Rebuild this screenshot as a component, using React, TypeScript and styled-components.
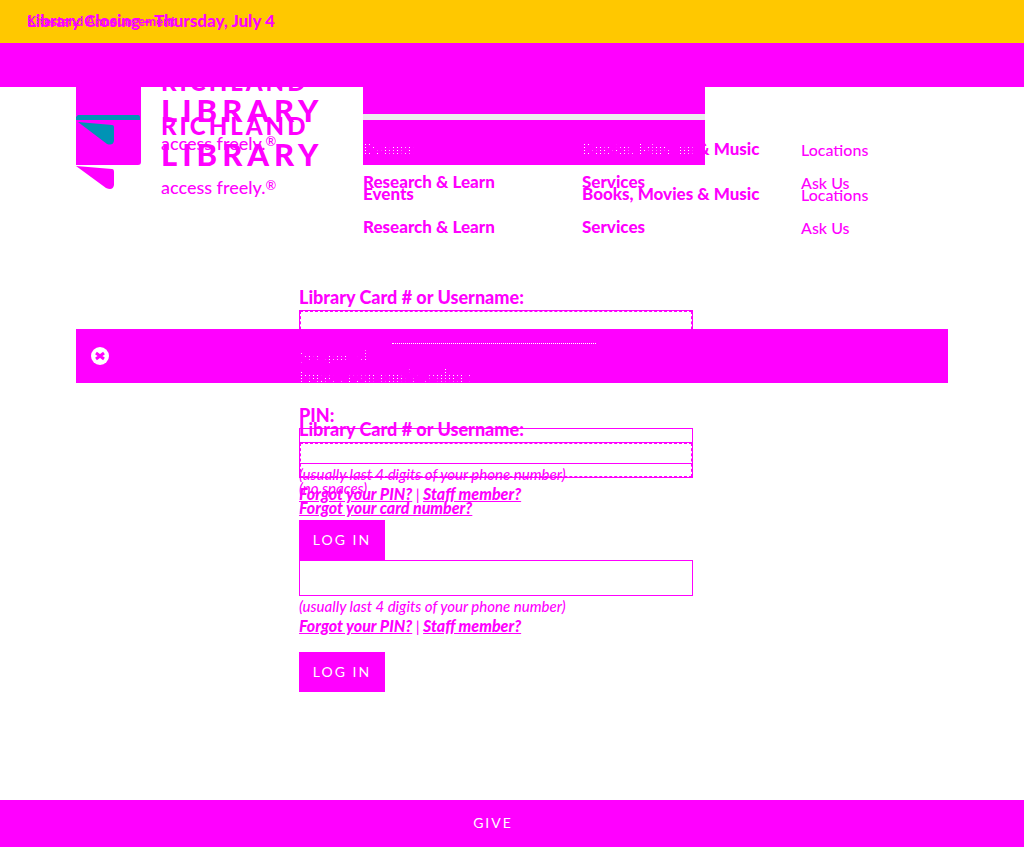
import React from 'react';
import styled, { createGlobalStyle } from 'styled-components';

const magenta = '#ff00ff';
const teal = '#0093b5';
const flecks = (color: string) =>
  `repeating-conic-gradient(${color} 0 12%, transparent 12% 100%) 0 0 / 4px 3px`;

const GlobalStyle = createGlobalStyle`
  * { box-sizing: border-box; }
  body { margin: 0; background: #fff; color: ${magenta}; font: 16px/20px Lato, sans-serif; }
  a { color: inherit; text-decoration: none; }
  p { margin: 0; }
`;

const Page = styled.div`
  min-height: 100vh;
  display: flex;
  flex-direction: column;
`;
const Notice = styled.div`
  display: grid;
  height: 43px;
  align-items: center;
  justify-items: start;
  padding: 0 27px 2px;
  background: #ffc800;
  font-size: 17px;
  font-weight: 900;
  a { grid-area: 1 / 1; }
`;
const OlderNotice = styled.a`
  font-size: 13px;
  color: transparent;
  background: ${flecks('#808060')}, ${magenta};
  background-clip: text;
`;
const Band = styled.div`
  height: 44px;
  background: ${magenta};
`;
const Content = styled.div`
  width: calc(100% - 152px);
  margin: 0 auto;
  flex: 1;
  display: grid;
  align-content: start;
`;
const Header = styled.header`
  grid-area: 1 / 1;
  display: grid;
  grid-template-columns: 287px 1fr;
  align-items: start;
`;
const Brand = styled.div`
  display: grid;
  grid-template-columns: 65px 1fr;
  column-gap: 20px;
`;
const Emblem = styled.svg`
  display: block;
  width: 65px;
  height: 104px;
`;
const Wordmarks = styled.div`
  display: grid;
  height: 120px;
  overflow: hidden;
`;
const Wordmark = styled.div<{ $top: number }>`
  grid-area: 1 / 1;
  margin-top: ${p => p.$top}px;
  white-space: nowrap;
`;
const Richland = styled.div`
  font-size: 24px;
  line-height: 27px;
  font-weight: 900;
  letter-spacing: 3px;
`;
const Library = styled.div`
  font-size: 31px;
  line-height: 30px;
  font-weight: 900;
  letter-spacing: 5px;
`;
const Tagline = styled.div`
  margin-top: 8px;
  font-size: 18px;
  line-height: 20px;
  font-weight: 500;
`;
const Registered = styled.span`
  font-size: 13px;
  line-height: 1;
  vertical-align: 4px;
`;
const HeaderMain = styled.div`
  display: grid;
`;
const Search = styled.div`
  grid-area: 1 / 1;
  width: 342px;
  height: 78px;
  display: flex;
  flex-direction: column;
  gap: 6px;
  background: #ececf0;
`;
const SearchRow = styled.div<{ $height: number }>`
  height: ${p => p.$height}px;
  background: ${magenta};
`;
const Nav = styled.nav<{ $top: number }>`
  grid-area: 1 / 1;
  margin-top: ${p => p.$top}px;
  display: grid;
  grid-template-columns: 219px 219px 1fr;
  align-content: start;
  row-gap: 12px;
  font-size: 17px;
  font-weight: 900;
  white-space: nowrap;
`;
const MinorLink = styled.a`
  padding-top: 1px;
  font-size: 16px;
  font-weight: 500;
`;
const Flecked = styled.span`
  color: transparent;
  background: ${flecks('#fff')};
  background-clip: text;
`;
const Form = styled.form<{ $top: number }>`
  grid-area: 1 / 1;
  justify-self: center;
  width: 394px;
  margin: ${p => p.$top}px 32px 0 0;
  position: relative;
  z-index: 1;
`;
const Label = styled.label`
  display: block;
  height: 23px;
  font-size: 18px;
  font-weight: 900;
`;
const Field = styled.input<{ $dashed?: boolean; $gap?: boolean }>`
  display: block;
  width: 100%;
  height: 36px;
  margin-top: ${p => (p.$gap ? 42 : 0)}px;
  padding: 0 10px;
  border: 1px solid ${magenta};
  border-radius: 0;
  background: transparent;
  color: ${magenta};
  outline: ${p => (p.$dashed ? `1px dashed ${magenta}` : 'none')};
  outline-offset: -2px;
`;
const Hint = styled.p`
  height: 20px;
  font-size: 15px;
  font-style: italic;
  font-weight: 500;
`;
const HintLink = styled.a<{ $plain?: boolean }>`
  font-size: 16px;
  font-weight: 900;
  text-decoration: ${p => (p.$plain ? 'none' : 'underline')};
`;
const Login = styled.button`
  display: block;
  width: 86px;
  height: 40px;
  margin-top: 16px;
  padding: 0;
  border: 0;
  background: ${magenta};
  color: #fff;
  font: 14px/20px Lato, sans-serif;
  letter-spacing: 2px;
`;
const PinLabel = styled(Label)`
  margin-top: 19px;
`;
const Alert = styled.div`
  grid-area: 1 / 1;
  height: 54px;
  margin-top: 242px;
  padding-left: 15px;
  display: flex;
  align-items: center;
  background: ${magenta};
`;
const Close = styled.button`
  display: flex;
  padding: 0;
  border: 0;
  background: none;
`;
const Dots = styled.span`
  align-self: flex-start;
  width: 204px;
  margin: 14px 0 0 283px;
  border-top: 1px dotted #fff;
`;
const Footer = styled.footer`
  height: 47px;
  display: flex;
  align-items: center;
  justify-content: center;
  background: ${magenta};
  color: #fff;
  font-size: 14px;
  letter-spacing: 2px;
  padding: 0 38px 2px 0;
`;

const Logotype = ({ top }: { top: number }) => (
  <Wordmark $top={top}>
    <Richland>RICHLAND</Richland>
    <Library>LIBRARY</Library>
    <Tagline>access freely.<Registered>®</Registered></Tagline>
  </Wordmark>
);

const MainNav = ({ top, flecked }: { top: number; flecked?: boolean }) => (
  <Nav $top={top}>
    <a href="#events">{flecked ? <Flecked>Events</Flecked> : 'Events'}</a>
    <a href="#books">{flecked ? <><Flecked>Books, Movies</Flecked> &amp; Music</> : 'Books, Movies & Music'}</a>
    <MinorLink href="#locations">Locations</MinorLink>
    <a href="#research">Research &amp; Learn</a>
    <a href="#services">Services</a>
    <MinorLink href="#ask">Ask Us</MinorLink>
  </Nav>
);

const LoginForm = ({ id, top, first }: { id: string; top: number; first?: boolean }) => (
  <Form $top={top}>
    <Label htmlFor={`${id}-card`}>Library Card # or Username:</Label>
    <Field id={`${id}-card`} $dashed />
    <Hint>{first ? <Flecked>(no spaces)</Flecked> : '(no spaces)'}</Hint>
    <Hint>
      <HintLink href="#card" $plain={first}>
        {first ? <Flecked>Forgot your card number?</Flecked> : 'Forgot your card number?'}
      </HintLink>
    </Hint>
    {first && <PinLabel htmlFor={`${id}-pin`}>PIN:</PinLabel>}
    <Field id={`${id}-pin`} type="password" aria-label="PIN" $gap={!first} />
    <Hint>(usually last 4 digits of your phone number)</Hint>
    <Hint><HintLink href="#pin">Forgot your PIN?</HintLink> | <HintLink href="#staff">Staff member?</HintLink></Hint>
    <Login type="button">LOG IN</Login>
  </Form>
);

export default function App() {
  return (
    <Page>
      <GlobalStyle />
      <Notice>
        <a href="#closing">Library Closing - Thursday, July 4</a>
        <OlderNotice href="#announcement">Kitestand Announcement</OlderNotice>
      </Notice>
      <Band />
      <Content>
        <Header>
          <Brand>
            <Emblem viewBox="0 0 65 104" aria-hidden="true">
              <path fill={magenta} d="M0 0H65V75Q65 78 62 78H0Z" />
              <path fill={teal} d="M2 28H62Q64 28 64 30V33H0V30Z M2 35L36 38Q38 38 38 40V54Q37 59 31 57Z" />
              <path fill={magenta} d="M0 79L36 82Q38 82 38 85V98Q37 104 30 101Z" />
            </Emblem>
            <Wordmarks>
              <Logotype top={-19} />
              <Logotype top={25} />
            </Wordmarks>
          </Brand>
          <HeaderMain>
            <Search>
              <SearchRow $height={27} />
              <SearchRow $height={45} />
            </Search>
            <MainNav top={52} flecked />
            <MainNav top={97} />
          </HeaderMain>
        </Header>
        <Alert>
          <Close type="button" aria-label="Close">
            <svg width="18" height="18" viewBox="0 0 18 18">
              <circle cx="9" cy="9" r="9" fill="#fff" />
              <path d="M5 6L13 12M13 6L5 12" stroke={magenta} strokeWidth="3" />
            </svg>
          </Close>
          <Dots />
        </Alert>
        <LoginForm id="first" top={200} first />
        <LoginForm id="second" top={332} />
      </Content>
      <Footer><a href="#give">GIVE</a></Footer>
    </Page>
  );
}
